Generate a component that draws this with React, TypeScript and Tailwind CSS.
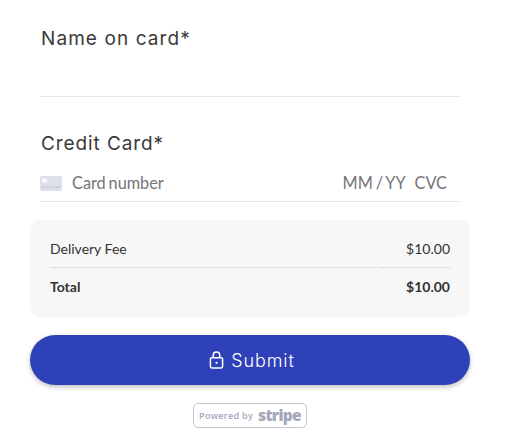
export default function App() {
  return (
    <div className="w-[507px] h-[442px] overflow-hidden bg-white font-['Lato',sans-serif] flex flex-col items-center pr-[7px]">
      <div className="w-[420px] pt-[27px]">
        <div className="h-[70px] border-b border-[#e8e8e8] pl-px">
          <div className="font-['Inter',sans-serif] text-[19px] leading-[24px] tracking-[1.08px] text-[#3a3a3a]">Name on card*</div>
        </div>
        <div className="mt-[35px] pl-px font-['Inter',sans-serif] text-[19px] leading-[24px] tracking-[0.9px] text-[#3a3a3a]">Credit Card*</div>
        <div className="mt-[11px] h-[35px] pb-[1px] border-b border-[#e8e8e8] flex items-center text-[16.3px] text-[#75757a] [word-spacing:-1.3px]">
          <svg width="22" height="15" viewBox="0 0 22 15" className="shrink-0">
            <rect width="22" height="15" rx="2" fill="#dde0e8" />
            <rect x="2" y="2.5" width="5" height="4" rx="0.5" fill="#f7f8fa" />
            <path d="M2 11h3M6.5 11h3M11 11h3M15.5 11h4" stroke="#b6bac6" strokeWidth="1" />
          </svg>
          <span className="ml-[10px]">Card number</span>
          <span className="ml-auto">MM / YY</span>
          <span className="ml-[9px] mr-[13px]">CVC</span>
        </div>
      </div>
      <div className="w-[440px] h-[97px] mt-[18px] rounded-[10px] bg-[#f7f7f7] px-5 text-[14px] text-[#333]">
        <div className="h-[48px] flex items-end justify-between pb-[8px] border-b border-[#dedede] relative">
          <span>Delivery Fee</span>
          <span>$10.00</span>
          <span className="absolute right-[71px] -bottom-px w-[2px] h-px bg-[#f7f7f7]" />
        </div>
        <div className="h-[38px] flex items-center justify-between font-bold pb-[2px]">
          <span>Total</span>
          <span>$10.00</span>
        </div>
      </div>
      <button className="w-[440px] h-[50px] mt-[18px] pl-[2px] rounded-[25px] bg-[#2f41b8] text-white flex items-center justify-center gap-[7px] shadow-[0_2px_5px_rgba(0,0,0,0.25)] font-['Inter',sans-serif] font-light text-[18px] tracking-[0.9px]">
        <svg width="15" height="18" viewBox="0 0 16 19" fill="none" stroke="white" strokeWidth="1.6" className="ml-[2px]">
          <rect x="1.5" y="7" width="13" height="11" rx="1.5" />
          <path d="M4.5 7V4.5a3.5 3.5 0 0 1 7 0V7" />
          <circle cx="8" cy="12.5" r="1.2" fill="white" stroke="none" />
        </svg>
        <span>Submit</span>
      </button>
      <div className="mt-[18px] w-[114px] h-[25px] rounded-[5px] border border-[#c4c6d6] flex items-center justify-center gap-[5px] text-[#a4a7bb] font-['Open_Sans',sans-serif]">
        <span className="text-[9px] font-semibold tracking-[0.3px]">Powered by</span>
        <span className="text-[15.5px] font-extrabold tracking-[-0.7px] leading-none">stripe</span>
      </div>
    </div>
  );
}
